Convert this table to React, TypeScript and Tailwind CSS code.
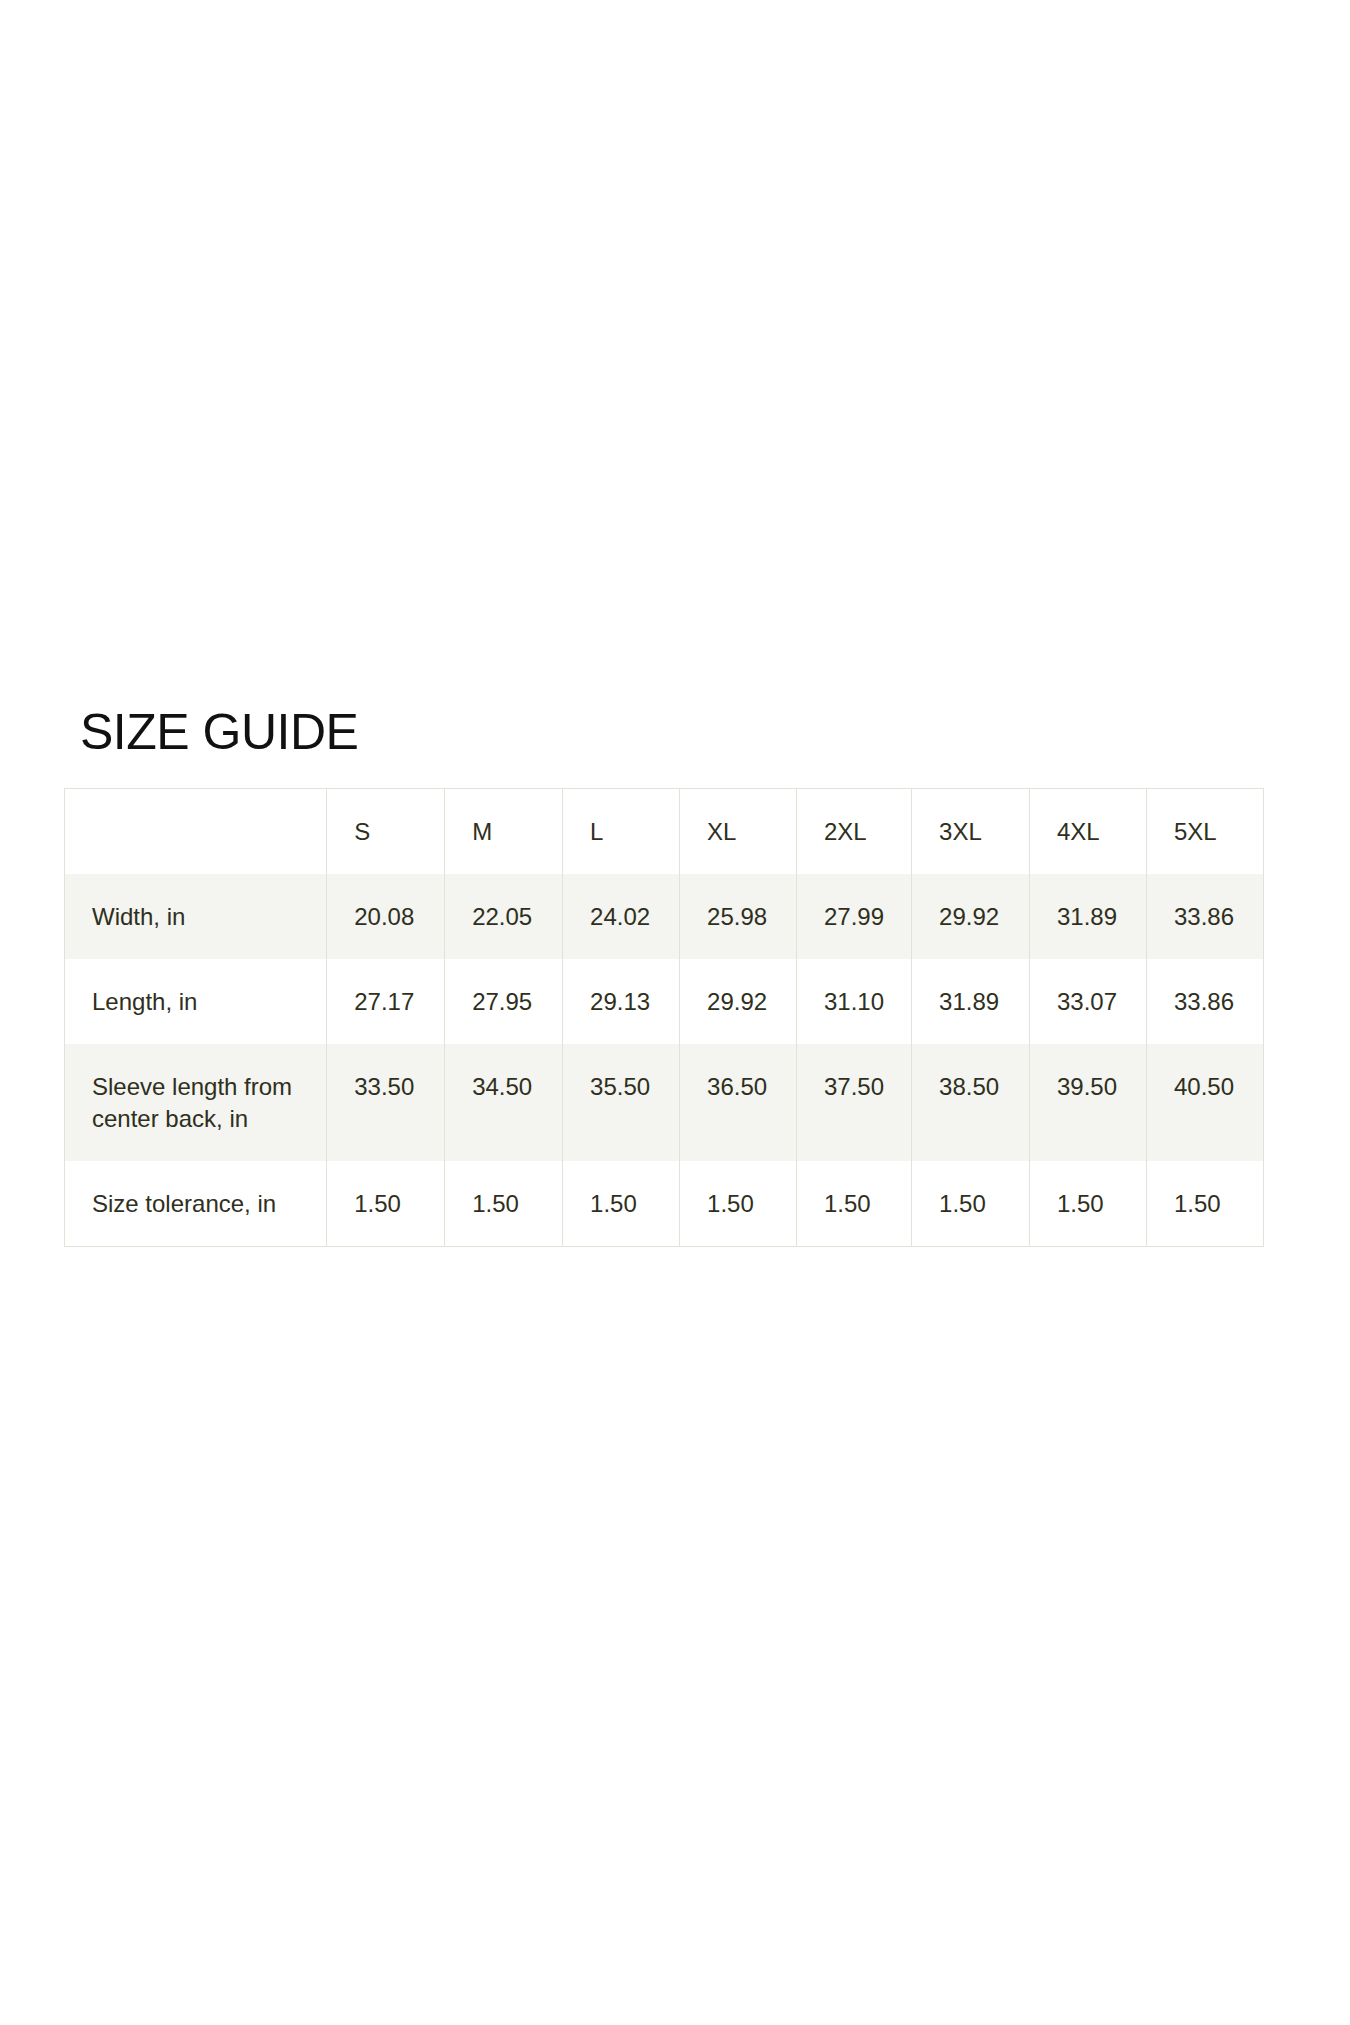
const sizes = ["S", "M", "L", "XL", "2XL", "3XL", "4XL", "5XL"];
const colWidths = ["w-[118px]", "w-[118px]", "w-[117px]", "w-[117px]", "w-[114px]", "w-[118px]", "w-[117px]", "w-[117px]"];

const rows: { label: string; values: string[] }[] = [
  { label: "Width, in", values: ["20.08", "22.05", "24.02", "25.98", "27.99", "29.92", "31.89", "33.86"] },
  { label: "Length, in", values: ["27.17", "27.95", "29.13", "29.92", "31.10", "31.89", "33.07", "33.86"] },
  { label: "Sleeve length from center back, in", values: ["33.50", "34.50", "35.50", "36.50", "37.50", "38.50", "39.50", "40.50"] },
  { label: "Size tolerance, in", values: ["1.50", "1.50", "1.50", "1.50", "1.50", "1.50", "1.50", "1.50"] },
];

const cell = "border-x border-[#e2e2d8] px-[27px] py-[26.5px] text-left align-top font-normal";

export default function App() {
  return (
    <div className="min-h-[2025px] bg-white pt-[704px] font-['Liberation_Sans',Arial,sans-serif] text-[#2f2f1d]">
      <div className="px-[64px]">
        <h1 className="ml-[16px] text-[50px] leading-[56px] font-normal tracking-[-0.5px] text-[#111]">SIZE GUIDE</h1>

        <table className="mt-[28px] w-[1200px] border-collapse border border-[#e2e2d8] text-[24px] leading-[32px]">
          <thead>
            <tr className="bg-white">
              <th className={`${cell} w-[264px]`} />
              {sizes.map((s, i) => (
                <th key={s} className={`${cell} ${colWidths[i]}`}>
                  {s}
                </th>
              ))}
            </tr>
          </thead>
          <tbody>
            {rows.map((r, ri) => (
              <tr key={r.label} className={ri % 2 === 0 ? "bg-[#f4f4f0]" : "bg-white"}>
                <td className={`${cell} pr-[20px]`}>{r.label}</td>
                {r.values.map((v, vi) => (
                  <td key={vi} className={cell}>
                    {v}
                  </td>
                ))}
              </tr>
            ))}
          </tbody>
        </table>
      </div>
    </div>
  );
}
